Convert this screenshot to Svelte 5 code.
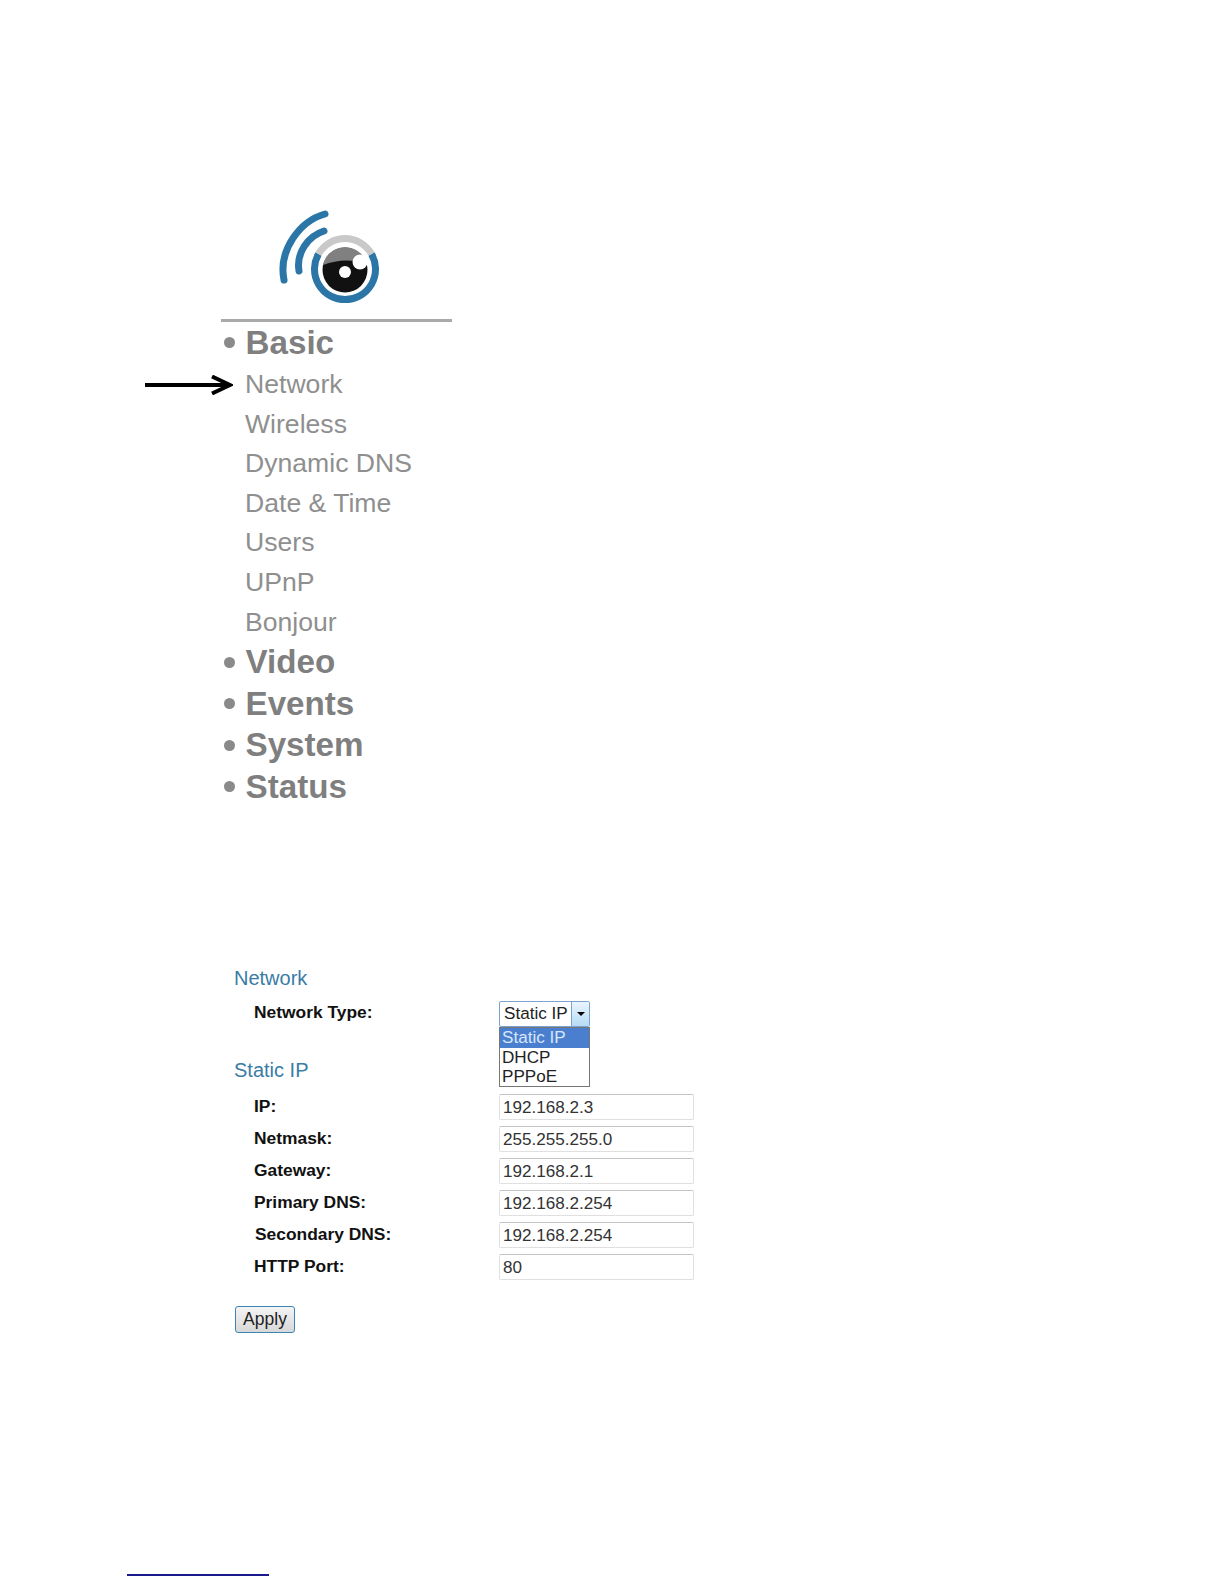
<script>
  const subItems = ['Network', 'Wireless', 'Dynamic DNS', 'Date & Time', 'Users', 'UPnP', 'Bonjour']
  const otherSections = ['Video', 'Events', 'System', 'Status']
  const fields = [
    { label: 'IP:', value: '192.168.2.3' },
    { label: 'Netmask:', value: '255.255.255.0' },
    { label: 'Gateway:', value: '192.168.2.1' },
    { label: 'Primary DNS:', value: '192.168.2.254' },
    { label: 'Secondary DNS:', value: '192.168.2.254' },
    { label: 'HTTP Port:', value: '80' }
  ]
  const networkTypes = ['Static IP', 'DHCP', 'PPPoE']
</script>

<div class="page">
  <nav class="nav">
    <svg class="logo" viewBox="0 0 110 114" width="110" height="114" aria-label="Logo">
      <path d="M50 9C25 16 3 45 9 75" fill="none" stroke="#2b76a6" stroke-width="7" stroke-linecap="round" />
      <path d="M49 26C33 31 21 48 24 66" fill="none" stroke="#2b76a6" stroke-width="7" stroke-linecap="round" />
      <path d="M43.5 49A30.5 30.5 0 1 0 96.5 49" fill="none" stroke="#2b76a6" stroke-width="7" />
      <path d="M43.5 49A30.5 30.5 0 0 1 96.5 49" fill="none" stroke="#c9c9c9" stroke-width="7" />
      <circle cx="70" cy="65" r="22.5" fill="#111" />
      <path d="M48 60A22.5 22.5 0 0 1 92 60Q72 51 48 60Z" fill="#808080" />
      <circle cx="85" cy="57" r="7.5" fill="#fff" />
      <circle cx="70" cy="67" r="6" fill="#fff" />
    </svg>
    <div class="rule"></div>

    <div class="section first"><span class="dot"></span>Basic</div>
    <ul class="sub">
      {#each subItems as item, i}
        <li>
          {#if i === 0}
            <svg class="arrow" viewBox="0 0 88 20" width="88" height="20" aria-hidden="true">
              <path d="M0 10H85M67 1.5L85 10L67 18.5" fill="none" stroke="#000" stroke-width="4" />
            </svg>
          {/if}
          {item}
        </li>
      {/each}
    </ul>
    {#each otherSections as section}
      <div class="section"><span class="dot"></span>{section}</div>
    {/each}
  </nav>

  <form class="form">
    <h2 class="heading">Network</h2>
    <div class="row type-row">
      <span class="label">Network Type:</span>
      <div class="combo">
        <div class="combo-box">
          <span class="combo-value">Static IP</span>
          <span class="combo-btn"><span class="caret"></span></span>
        </div>
        <ul class="combo-list">
          {#each networkTypes as type, i}
            <li class:active={i === 0}>{type}</li>
          {/each}
        </ul>
      </div>
    </div>

    <h2 class="heading static">Static IP</h2>
    {#each fields as field}
      <div class="row">
        <span class="label" class:shifted={field.label === 'Secondary DNS:'}>{field.label}</span>
        <div class="input">{field.value}</div>
      </div>
    {/each}

    <button type="button" class="apply">Apply</button>
  </form>

  <div class="footnote-rule"></div>
</div>

<style>
  :global(body) {
    margin: 0;
    background: #fff;
  }

  .page {
    height: 1584px;
    overflow: hidden;
    box-sizing: border-box;
    padding-top: 205px;
    font-family: 'Liberation Sans', Arial, sans-serif;
  }

  .nav {
    width: 231px;
    margin-left: 221px;
  }

  .logo {
    display: block;
    margin-left: 54px;
  }

  .rule {
    height: 3px;
    background: #a9a9a9;
  }

  .section {
    display: flex;
    align-items: center;
    gap: 10.5px;
    padding-left: 3px;
    height: 41.4px;
    font-size: 33.2px;
    font-weight: 700;
    color: #7f7f7f;
  }

  .section.first {
    height: 41px;
    margin-bottom: 2px;
  }

  .dot {
    width: 11px;
    height: 11px;
    border-radius: 50%;
    background: #8a8a8a;
  }

  .sub {
    list-style: none;
    margin: 0 0 -0.5px 24px;
    padding: 0;
    font-size: 26.6px;
    color: #8f8f8f;
  }

  .sub li {
    position: relative;
    height: 39.6px;
    line-height: 39.6px;
  }

  .arrow {
    position: absolute;
    left: -100px;
    top: 10px;
  }

  .form {
    margin: 159px 0 0 234px;
    font-size: 17.1px;
    color: #111;
  }

  .heading {
    margin: 0;
    height: 24px;
    line-height: 24px;
    font-size: 20px;
    font-weight: 400;
    color: #3a7ca5;
  }

  .heading.static {
    margin-top: 18px;
    margin-bottom: 12px;
  }

  .row {
    display: flex;
    height: 26px;
    margin-bottom: 6px;
  }

  .type-row {
    margin-top: 11px;
    margin-bottom: 31px;
  }

  .type-row .label {
    line-height: 22px;
  }

  .label {
    width: 245px;
    margin-left: 20px;
    line-height: 24px;
    font-size: 17.4px;
    font-weight: 700;
  }

  .label.shifted {
    margin-left: 21px;
    width: 244px;
  }

  .combo {
    position: relative;
    width: 91px;
  }

  .combo-box {
    display: flex;
    box-sizing: border-box;
    height: 26px;
    border: 1px solid #7da2ce;
    border-radius: 2px;
  }

  .combo-value {
    flex: 1;
    padding-left: 4px;
    line-height: 24px;
    color: #222;
  }

  .combo-btn {
    display: flex;
    align-items: center;
    justify-content: center;
    width: 17px;
    border-left: 1px solid #7da2ce;
    background: linear-gradient(#eaf5fd, #b5dcf5);
  }

  .caret {
    border: 4px solid transparent;
    border-top: 4px solid #000;
    border-bottom: 0;
  }

  .combo-list {
    position: absolute;
    top: 26px;
    left: 0;
    width: 91px;
    box-sizing: border-box;
    height: 60px;
    margin: 0;
    padding: 0;
    list-style: none;
    border: 1px solid #767676;
    background: #fff;
    color: #222;
  }

  .combo-list li {
    height: 19.4px;
    line-height: 19.4px;
    padding-left: 2px;
  }

  .combo-list li.active {
    background: #4a7fd0;
    color: #d8e6fa;
  }

  .input {
    box-sizing: border-box;
    width: 195px;
    height: 26px;
    padding-left: 3px;
    line-height: 25px;
    border: 1px solid #e0e0e0;
    border-top-color: #c4c4c4;
    border-radius: 2px;
    color: #333;
  }

  .apply {
    display: block;
    box-sizing: border-box;
    width: 60px;
    height: 27px;
    margin: 26px 0 0 1px;
    padding: 0;
    border: 1.5px solid #3c86b5;
    border-radius: 3px;
    background: linear-gradient(#f4f4f4, #d8d8d8);
    font-family: inherit;
    font-size: 17.5px;
    color: #222;
  }

  .footnote-rule {
    width: 142px;
    height: 1.5px;
    margin: 241px 0 0 127px;
    background: #1a1a8c;
  }
</style>
